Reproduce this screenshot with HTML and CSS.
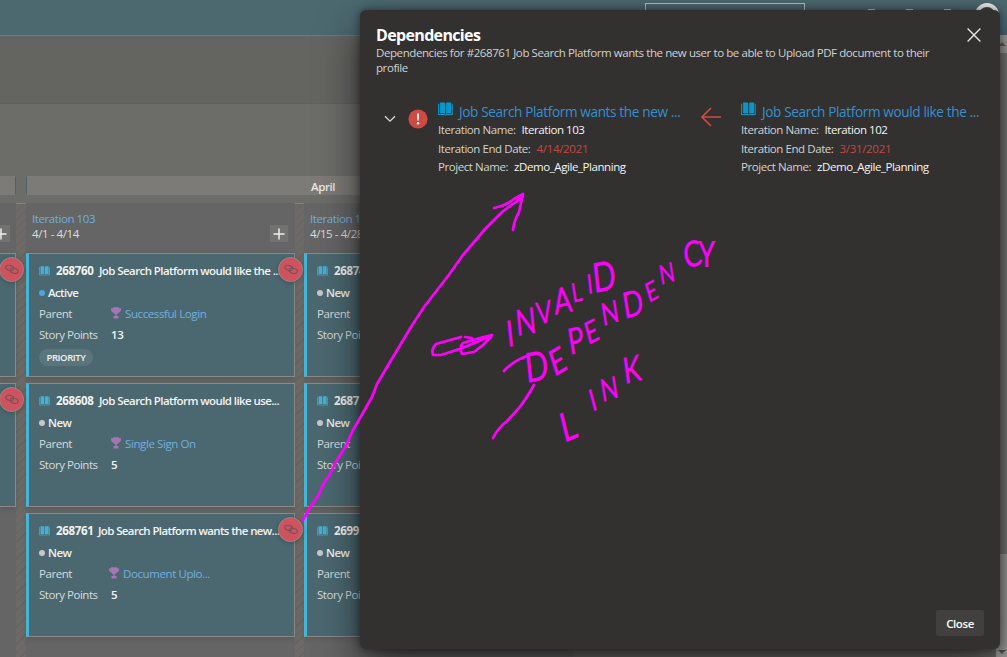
FILE: index.html
```html
<!DOCTYPE html>
<html lang="en">
<head>
<meta charset="utf-8">
<title>Dependencies</title>
<link rel="stylesheet" href="styles.css">
</head>
<body>
<svg width="0" height="0" class="defs">
  <symbol id="book" viewBox="0 0 16 14"><path d="M2.2 0h4.3q1 0 1.2.8V12q-.5-.7-1.3-.7H2.2zM8.7.8q.2-.8 1.2-.8h4.1v11.3H10q-.8 0-1.3.7z" fill="currentColor"/><path d="M.6 1.5v11.3h6.2l1.2.7 1.2-.7h6V1.5" fill="none" stroke="currentColor" stroke-width="1.1"/></symbol>
  <symbol id="trophy" viewBox="0 0 10 12"><path d="M2 .3h6v1h2v1.5q0 2.3-2.5 2.9Q7 6.900 5.700 7.200V9H7.500v2.500h-5V9h1.800V7.200Q3 6.900 2.500 5.700 0 5.100 0 2.800V1.300h2z" fill="currentColor"/></symbol>
  <symbol id="link" viewBox="0 0 14 11"><g fill="none" stroke="currentColor" stroke-width="1"><ellipse cx="4.700" cy="3.900" rx="4" ry="2.500" transform="rotate(15 4.700 3.900)"/><ellipse cx="9.300" cy="6.800" rx="4" ry="2.500" transform="rotate(15 9.300 6.800)"/></g></symbol>
</svg>
<div class="app">
  <header class="topbar">
    <div class="search"></div>
    <i class="dash"></i><i class="dash"></i><i class="dash"></i>
    <div class="avatar"></div>
  </header>
  <div class="toolbar"></div>
  <main class="timeline">
    <div class="months"><div class="month month-prev"></div><div class="month month-main"><span>April</span></div></div>
    <div class="board">
      <section class="col col-prev">
        <div class="col-head"><span class="add"><svg viewBox="0 0 12 12"><path d="M6 .5v11M.5 6h11"/></svg></span></div>
        <article class="card"><span class="badge"><svg><use href="#link"/></svg></span></article>
        <article class="card"><span class="badge"><svg><use href="#link"/></svg></span></article>
      </section>
      <div class="gutter"></div>
      <section class="col col-main">
        <div class="col-head"><div><a>Iteration 103</a><p>4/1 - 4/14</p></div><span class="add"><svg viewBox="0 0 12 12"><path d="M6 .5v11M.5 6h11"/></svg></span></div>
        <article class="card">
          <div class="row title"><svg class="book"><use href="#book"/></svg><b>268760</b><span>Job Search Platform would like the ...</span></div>
          <div class="row state"><i class="dot active"></i>Active</div>
          <div class="row"><span class="label">Parent</span><svg class="trophy"><use href="#trophy"/></svg><a>Successful Login</a></div>
          <div class="row"><span class="label">Story Points</span><span class="points">13</span></div>
          <span class="tag">PRIORITY</span>
          <span class="badge"><svg><use href="#link"/></svg></span>
        </article>
        <article class="card">
          <div class="row title"><svg class="book"><use href="#book"/></svg><b>268608</b><span>Job Search Platform would like use...</span></div>
          <div class="row state"><i class="dot"></i>New</div>
          <div class="row"><span class="label">Parent</span><svg class="trophy"><use href="#trophy"/></svg><a>Single Sign On</a></div>
          <div class="row"><span class="label">Story Points</span><span class="points">5</span></div>
        </article>
        <article class="card">
          <div class="row title tight"><svg class="book"><use href="#book"/></svg><b>268761</b><span>Job Search Platform wants the new...</span></div>
          <div class="row state"><i class="dot"></i>New</div>
          <div class="row narrow"><span class="label">Parent</span><svg class="trophy"><use href="#trophy"/></svg><a>Document Uplo...</a></div>
          <div class="row"><span class="label">Story Points</span><span class="points">5</span></div>
          <span class="badge"><svg><use href="#link"/></svg></span>
        </article>
      </section>
      <div class="gutter gutter-right"></div>
      <section class="col col-next">
        <div class="col-head"><div><a>Iteration 104</a><p>4/15 - 4/28</p></div></div>
        <article class="card">
          <div class="row title"><svg class="book"><use href="#book"/></svg><b>26874</b></div>
          <div class="row state"><i class="dot"></i>New</div>
          <div class="row"><span class="label">Parent</span></div>
          <div class="row"><span class="label">Story Points</span></div>
        </article>
        <article class="card">
          <div class="row title"><svg class="book"><use href="#book"/></svg><b>2687</b></div>
          <div class="row state"><i class="dot"></i>New</div>
          <div class="row"><span class="label">Parent</span></div>
          <div class="row"><span class="label">Story Points</span></div>
        </article>
        <article class="card">
          <div class="row title"><svg class="book"><use href="#book"/></svg><b>2699</b></div>
          <div class="row state"><i class="dot"></i>New</div>
          <div class="row"><span class="label">Parent</span></div>
          <div class="row"><span class="label">Story Points</span></div>
        </article>
      </section>
    </div>
  </main>
  <div class="scrollbar"><i class="up"></i><div class="thumb"></div><i class="down"></i></div>
</div>

<div class="dialog" role="dialog">
  <div class="dialog-head">
    <div><h1>Dependencies</h1>
    <p class="desc"><span>Dependencies for #268761 Job Search Platform wants the new user to be able to Upload PDF document to their</span><br>profile</p></div>
    <svg class="close-x" viewBox="0 0 14 14"><path d="M.6.6l12.800 12.800M13.400.6L.6 13.400" stroke="#e4e3e2" stroke-width="1.400" fill="none"/></svg>
  </div>
  <div class="dep">
    <svg class="chevron" viewBox="0 0 12 8"><path d="M1 1.200l5 5 5-5" fill="none" stroke="#dddcdb" stroke-width="1.300"/></svg>
    <svg class="alert" viewBox="0 0 20 20"><circle cx="10" cy="10" r="9.600" fill="#cd4a45"/><path d="M9 4.500h2l-.3 7H9.300z" fill="#fff"/><circle cx="10" cy="14.300" r="1.200" fill="#fff"/></svg>
    <div class="item">
      <div class="item-title"><svg><use href="#book"/></svg><a>Job Search Platform wants the new ...</a></div>
      <div class="field"><span>Iteration Name:</span><b>Iteration 103</b></div>
      <div class="field"><span>Iteration End Date:</span><em>4/14/2021</em></div>
      <div class="field"><span>Project Name:</span><b>zDemo_Agile_Planning</b></div>
    </div>
    <svg class="arrow" viewBox="0 0 20 20"><path d="M20 10H1M10 1L1 10l9 9" fill="none" stroke="#cd4a45" stroke-width="1.700"/></svg>
    <div class="item">
      <div class="item-title"><svg><use href="#book"/></svg><a>Job Search Platform would like the ...</a></div>
      <div class="field"><span>Iteration Name:</span><b>Iteration 102</b></div>
      <div class="field"><span>Iteration End Date:</span><em>3/31/2021</em></div>
      <div class="field"><span>Project Name:</span><b>zDemo_Agile_Planning</b></div>
    </div>
  </div>
  <div class="dialog-foot"><button>Close</button></div>
</div>

<svg class="ink" viewBox="0 0 1007 657">
  <path d="M303 520L311 506L318 496L323 485L330 474L337 460L346 446L352 432L372 397L377 384L387 367L405 337L411 327L424 307L448 276L463 255L486 228L502 212L521 198"/>
  <path d="M494 208Q505 206 514 199L523 194L519 212Q514 221 513 230"/>
  <path d="M461 337L436 344Q431 349 433 355L441 355Q454 351 465 347L491 336L492 335L480 338L463 343Q459 347 462 354L474 352Q483 346 491 337M465 337L472 338V341"/>
  <path d="M504 371Q513 361 527 356M534 385Q526 399 519 408L507 421Q498 428 493 438"/>
  <g transform="scale(.75 1)">
    <text x="677 689 717 740 764 784 792" y="347 336 325 315 303 294 293" rotate="-8 -7 -10 -9 -12 -8 -8"><tspan class="l">I</tspan><tspan class="l">N</tspan><tspan>V</tspan><tspan class="l">A</tspan><tspan class="s">L</tspan><tspan class="s">I</tspan><tspan class="xl">D</tspan></text>
    <text x="702 739 760 784 804 833 865 881 914 931" y="383 377 355 345 326 319 303 285 269 267" rotate="-8 -24 -12 -20 -12 -12 -22 -12 -12 0"><tspan class="xl">D</tspan><tspan class="l">E</tspan><tspan class="l">P</tspan><tspan>E</tspan><tspan>N</tspan><tspan class="l">D</tspan><tspan class="s">E</tspan><tspan class="s">N</tspan><tspan class="l">C</tspan><tspan class="l">Y</tspan></text>
    <text x="752 790 803 833" y="443 412 402 384" rotate="-18 -20 -12 -10"><tspan class="xl">L</tspan><tspan>I</tspan><tspan>N</tspan><tspan class="l">K</tspan></text>
  </g>
</svg>
</body>
</html>
```
FILE: styles.css
```css
* { box-sizing: border-box; }
body { margin: 0; width: 1007px; height: 657px; overflow: hidden; position: relative; font: 11.500px/15px "Open Sans", "Noto Sans", sans-serif; letter-spacing: -0.42px; background: #656562; color: #e8e8e6; white-space: nowrap; }
p, h1 { margin: 0; }
b { font-weight: 600; }
.defs { position: absolute; }
.app { height: 657px; overflow: hidden; display: grid; grid-template: 35px 69px 1fr / 1fr 11px; }
.topbar { grid-column: 1 / 3; background: #4c6970; display: flex; align-items: flex-start; padding: 3px 7px 0 645px; }
.search { width: 160px; height: 25px; border: 1px solid #b6bdbf; margin-right: 63px; flex: none; }
.dash { width: 7px; height: 2px; margin: 6px 31px 0 0; background: #b9c2c4; flex: none; }
.avatar { width: 24px; height: 24px; border-radius: 50%; border: 4px solid #eee; background: #444; margin-left: -7px; flex: none; }
.toolbar { grid-column: 1 / 2; background: #646461; border-top: 1px solid #777; border-bottom: 1px solid #60605d; }
.timeline { grid-row: 3; grid-column: 1; background: #6c6c69; padding-top: 72px; min-width: 0; overflow: hidden; }
.months { display: flex; gap: 10px; height: 19px; }
.month { background: #7d7b77; border: 1px solid #7d7b77; }
.month-prev { width: 16px; border-right-color: #49646a; }
.month-main { flex: 1; border-left-color: #49646a; padding: 2px 0 0 284px; font-weight: 600; letter-spacing: -.4px; }
.board { display: flex; height: 454px; margin-top: 8px; }
.col { background: #656565; display: flex; flex-direction: column; flex: none; }
.col-prev { width: 16px; }
.col-main { width: 269px; }
.col-next { width: 269px; }
.gutter { width: 10px; border-top: 1px solid #858580; background: repeating-linear-gradient(135deg, #6b6a67 0 5px, #646360 5px 6px); }
.gutter-right { width: 9px; }
.col-head { height: 50px; display: flex; justify-content: space-between; padding: 8px 7px 0 6px; line-height: 15px; color: #dededc; }
.col-prev .col-head { justify-content: flex-end; padding-right: 6px; }
a { color: #71afe0; }
.add { width: 18px; height: 17px; margin-top: 14px; background: #727270; flex: none; display: grid; place-items: center; }
.add svg { width: 12px; height: 12px; stroke: #eee; stroke-width: 1.500; }
.card { position: relative; height: 124px; margin-bottom: 6px; background: #4b6870; border: 1px solid #8b8a86; border-left: 3px solid #45b4d9; padding: 6px 0 0 10px; box-shadow: 0 2px 4px #4445; }
.col-prev .card { border-left: 0; }
.row { height: 21.400px; display: flex; align-items: center; color: #d7dcdd; }
.title { color: #f3f3f2; font-weight: 600; letter-spacing: -.58px; }
.title b { width: 38px; margin: 0 5px 0 6px; font-weight: 700; letter-spacing: -.35px; flex: none; }
.tight span { margin-left: -1px; letter-spacing: -.62px; }
.book { width: 11px; height: 10px; color: #43b1d6; flex: none; }
.state { color: #f0f0ef; font-weight: 600; letter-spacing: -.6px; padding-top: 1px; }
.dot { width: 6px; height: 6px; border-radius: 50%; background: #c8c8c6; margin-right: 3px; }
.dot.active { background: #4da4e5; }
.label { width: 72px; letter-spacing: -.46px; }
.trophy { width: 10px; height: 12px; color: #a576b5; margin-right: 4px; flex: none; }
.narrow .trophy { margin-left: -2px; }
.row a { letter-spacing: -.4px; }
.points { color: #f3f3f2; font-weight: 600; }
.tag { display: block; width: 54px; height: 17px; margin-top: 3px; border-radius: 9px; background: #5a757b; font-size: 9.500px; line-height: 17px; font-weight: 600; text-align: center; color: #f3f3f2; }
.badge { position: absolute; right: -9px; top: 3px; width: 25px; height: 25px; border-radius: 50%; background: #cf525f; border: 1px solid #958986; color: #70545a; display: grid; place-items: center; box-shadow: 0 1px 4px #3336; z-index: 2; }
.badge svg { width: 14px; height: 11px; }
.scrollbar { grid-row: 2 / 4; grid-column: 2; background: #a3a3a1; display: flex; flex-direction: column; align-items: center; justify-content: space-between; padding: 7px 0 3px 0; }
.thumb { width: 100%; flex: 1; background: #7d7d7b; margin: 7px 0 96px; }
.up, .down { border: 4px solid transparent; border-bottom-color: #656563; border-top-width: 0; }
.down { border-top: 4px solid #555; border-bottom-width: 0; }
.dialog { position: absolute; left: 360px; top: 10px; width: 640px; height: 639px; border-radius: 6px; background: #32312f; box-shadow: 0 0 9px #0007, 0 18px 42px #0009; padding: 16px; display: flex; flex-direction: column; color: #d3d2d1; }
.dialog-head { display: flex; justify-content: space-between; height: 75px; }
h1 { font-size: 16px; line-height: 19px; font-weight: 700; letter-spacing: -.65px; color: #fff; }
.desc { letter-spacing: -.415px; }
.close-x { width: 14px; height: 14px; margin: 2px 3px 0 0; flex: none; }
.dep { display: flex; }
.chevron { width: 12px; height: 8px; margin: 14px 12px 0 8px; flex: none; }
.alert { width: 20px; height: 20px; margin: 8px 10px 0 0; flex: none; }
.item { width: 243px; flex: none; }
.item-title { height: 20px; display: flex; align-items: center; font-size: 13.600px; letter-spacing: -.37px; }
.item-title svg { width: 15px; height: 14px; color: #0797ca; margin: -4px 6px 0 0; flex: none; }
.item-title a { color: #378fd0; }
.field { height: 18.500px; line-height: 17px; display: flex; gap: 6px; letter-spacing: -.43px; }
.field b { color: #f5f5f5; font-weight: 500; }
.field em { color: #c44743; font-style: normal; letter-spacing: -.3px; }
.arrow { width: 20px; height: 20px; margin: 6px 20px 0 20px; flex: none; }
.dialog-foot { margin-top: auto; display: flex; justify-content: flex-end; margin-bottom: -3px; }
button { width: 48px; height: 26px; border: 0; border-radius: 2px; background: #41403e; color: #fff; font: 600 11.500px "Open Sans", sans-serif; letter-spacing: -.4px; padding: 1px 0 0; }
.ink { position: absolute; left: 0; top: 0; width: 1007px; height: 657px; pointer-events: none; }
.ink path { fill: none; stroke: #f0f; stroke-width: 2.700; stroke-linejoin: round; stroke-linecap: round; }
.ink text { fill: #f0f; stroke: #f0f; stroke-width: .2; font-family: Lato, sans-serif; font-size: 31px; letter-spacing: 0; }
.ink .s { font-size: 27px; }
.ink .l { font-size: 36px; }
.ink .xl { font-size: 41px; }
```
